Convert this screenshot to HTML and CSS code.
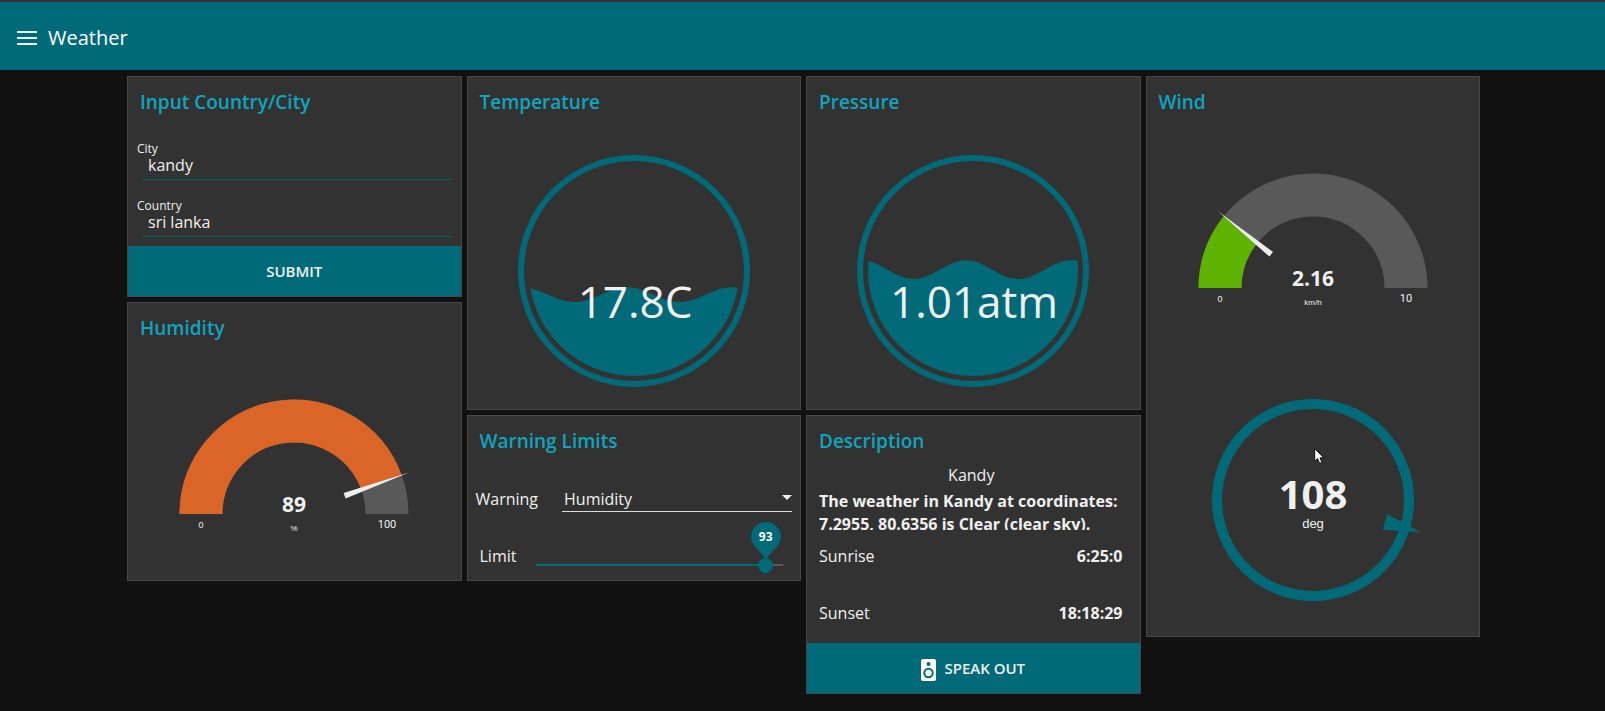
FILE: index.html
```html
<!DOCTYPE html>
<html lang="en">
<head>
<meta charset="utf-8">
<title>Weather</title>
<link rel="stylesheet" href="styles.css">
</head>
<body>
<header class="toolbar">
  <button class="menu" type="button" aria-label="Menu">
    <svg width="20" height="14" viewBox="0 0 20 14"><path d="M0 1h20M0 7h20M0 13h20" stroke="currentColor" stroke-width="2"/></svg>
  </button>
  <h1 class="brand">Weather</h1>
</header>
<main class="board">
  <div class="column">
    <form class="card">
      <h2 class="card-title">Input Country/City</h2>
      <div class="fields">
        <div class="field">
          <label for="city">City</label>
          <input id="city" type="text" value="kandy">
        </div>
        <div class="field">
          <label for="country">Country</label>
          <input id="country" type="text" value="sri lanka">
        </div>
      </div>
      <button class="action" type="button">SUBMIT</button>
    </form>
    <section class="card">
      <h2 class="card-title">Humidity</h2>
      <svg class="gauge" width="250" height="150" viewBox="-125 -125 250 150">
        <path class="rest" d="M-93 0A93 93 0 0 1 93 0"/>
        <path class="hot" d="M-93 0A93 93 0 0 1 87.5 -31.5"/>
        <path class="needle" d="M49.6 -21L51.6 -15.5L115 -41.4Z"/>
        <text class="gauge-value" y="-2">89</text>
        <text class="gauge-unit" y="17">%</text>
        <text class="gauge-min" x="-93" y="14">0</text>
        <text class="gauge-max" x="93" y="14">100</text>
      </svg>
    </section>
  </div>
  <div class="column">
    <section class="card">
      <h2 class="card-title">Temperature</h2>
      <svg class="tank" width="234" height="234" viewBox="-117 -117 234 234">
        <clipPath id="bowl"><circle r="105"/></clipPath>
        <circle class="ring" r="113"/>
        <path class="liquid" clip-path="url(#bowl)" d="M-112 16.3C-93 16.3 -79 31 -59.5 31S-26 16.3 -7 16.3S26 31 45.5 31S79 16.3 98 16.3S131 31 150 31V117H-112Z"/>
        <text class="tank-value" x="1" y="47">17.8C</text>
      </svg>
    </section>
    <section class="card">
      <h2 class="card-title">Warning Limits</h2>
      <div class="warning-row">
        <label for="warning">Warning</label>
        <div class="select">
          <select id="warning"><option>Humidity</option></select>
          <svg class="caret" width="10" height="5" viewBox="0 0 10 5"><path d="M0 0H10L5 5Z" fill="currentColor"/></svg>
        </div>
      </div>
      <div class="limit-row">
        <label for="limit">Limit</label>
        <div class="slider">
          <input id="limit" type="range" min="0" max="100" value="93">
          <output class="bubble" for="limit" style="left:93%">
            <svg width="30" height="38" viewBox="0 0 30 38"><path d="M15 38C12 31 0 24 0 15A15 15 0 0 1 30 15C30 24 18 31 15 38Z" fill="currentColor"/></svg>
            <span>93</span>
          </output>
        </div>
      </div>
    </section>
  </div>
  <div class="column">
    <section class="card">
      <h2 class="card-title">Pressure</h2>
      <svg class="tank" width="234" height="234" viewBox="-117 -117 234 234">
        <circle class="ring" r="113"/>
        <path class="liquid" clip-path="url(#bowl)" d="M-112 -10.7C-93 -10.7 -79 8 -59.5 8S-26 -10.7 -7 -10.7S26 8 45.5 8S79 -10.7 98 -10.7S131 8 150 8V117H-112Z"/>
        <text class="tank-value" x="1" y="47">1.01atm</text>
      </svg>
    </section>
    <section class="card">
      <h2 class="card-title compact">Description</h2>
      <p class="place">Kandy</p>
      <p class="summary">The weather in Kandy at coordinates: 7.2955, 80.6356 is Clear (clear sky).</p>
      <dl class="times">
        <div><dt>Sunrise</dt><dd>6:25:0</dd></div>
        <div><dt>Sunset</dt><dd>18:18:29</dd></div>
      </dl>
      <button class="action" type="button">
        <svg class="speaker" width="15" height="22" viewBox="0 0 15 22"><rect width="15" height="22" rx="2" fill="#fff"/><circle class="hole" cx="7.5" cy="5" r="2"/><circle class="hole" cx="7.5" cy="14" r="5.2"/><circle cx="7.5" cy="14" r="3.2" fill="#fff"/></svg>
        SPEAK OUT
      </button>
    </section>
  </div>
  <div class="column">
    <section class="card">
      <h2 class="card-title">Wind</h2>
      <svg class="gauge" width="250" height="150" viewBox="-125 -125 250 150">
        <path class="rest" d="M-93 0A93 93 0 0 1 93 0"/>
        <path class="calm" d="M-93 0A93 93 0 0 1 -72.4 -58.4"/>
        <path class="needle" d="M-43.6 -31.4L-40 -35.9L-95 -76.7Z"/>
        <text class="gauge-value" y="-2">2.16</text>
        <text class="gauge-unit" y="17">km/h</text>
        <text class="gauge-min" x="-93" y="14">0</text>
        <text class="gauge-max" x="93" y="14">10</text>
      </svg>
      <div class="compass">
        <svg class="dial" width="230" height="230" viewBox="-115 -115 230 230">
          <circle class="track" r="96"/>
          <path class="arrow" d="M74.3 14L69.7 29.7L107.7 32.3Z"/>
          <text class="dial-value" y="9">108</text>
          <text class="dial-unit" y="28">deg</text>
        </svg>
        <svg class="pointer" width="11" height="17" viewBox="0 0 11 17"><path d="M.7 .8V13.2L3.6 10.6L5.6 15.4L7.9 14.4L6 9.8H9.9Z" fill="#fff" stroke="#111"/></svg>
      </div>
    </section>
  </div>
</main>
</body>
</html>
```
FILE: styles.css
```css
:root {
  --teal: #006a78;
  --card: #333232;
  --text: #f0f0f0;
}

* { box-sizing: border-box; }

body {
  margin: 0;
  min-height: 100vh;
  background: #111;
  color: var(--text);
  font: 16px/26px "Open Sans", "Noto Sans", sans-serif;
}

h1, h2, p, dl, dd { margin: 0; }
button, input, select { font: inherit; color: inherit; }
svg { display: block; }

.toolbar {
  display: flex;
  align-items: center;
  gap: 11px;
  height: 70px;
  padding: 4px 17px 0;
  border-top: 2px solid #3a2f36;
  background: var(--teal);
}

.menu {
  padding: 0;
  border: 0;
  background: none;
}

.brand {
  font-size: 20px;
  font-weight: 400;
  color: #fff;
}

.board {
  display: grid;
  grid-template-columns: repeat(4, 1fr);
  align-items: start;
  gap: 5px;
  max-width: 1355px;
  margin: 0 auto;
  padding: 6px 0 16px 2px;
}

.column { display: grid; gap: 5px; }

.card {
  display: flow-root;
  border: 1px solid #474747;
  background: var(--card);
}

.card-title {
  padding: 11px 12px 12px;
  font-size: 19px;
  line-height: 28px;
  font-weight: 600;
  color: #0ea5bf;
}

.card-title.compact { padding-bottom: 8px; }

.fields {
  display: grid;
  gap: 18px;
  padding: 13px 9px 9px;
}

.field label {
  display: block;
  font-size: 12px;
  line-height: 16px;
}

.field input {
  display: block;
  width: calc(100% - 5px);
  height: 23px;
  margin-left: 5px;
  padding: 0 6px 7px;
  border: 0;
  border-bottom: 1px solid #155c5c;
  background: none;
  outline: 0;
}

.action {
  display: flex;
  align-items: center;
  justify-content: center;
  gap: 8px;
  width: 100%;
  height: 50px;
  padding: 0;
  border: 0;
  background: var(--teal);
  font-size: 15px;
  font-weight: 600;
}

.speaker { margin-top: 4px; }
.hole { fill: var(--teal); }

.gauge { margin: 35px auto 41px; }
.gauge path { fill: none; stroke-width: 43; }
.gauge .rest { stroke: #595959; }
.gauge .hot { stroke: #da6527; }
.gauge .calm { stroke: #5eb300; }
.gauge .needle { fill: #eee; }

.gauge text, .tank text, .dial text { fill: var(--text); text-anchor: middle; }
.gauge-value { font-size: 21px; font-weight: 700; }
.gauge-unit { font: 8px "Liberation Sans", sans-serif; }
.gauge-min { font: 9px "Liberation Sans", sans-serif; }
.gauge-max { font: 11px Roboto, sans-serif; }

.tank { margin: 26px auto 21px; }
.ring { fill: none; stroke: var(--teal); stroke-width: 6; }
.liquid { fill: var(--teal); }
.tank-value { font-size: 44px; }

.compass {
  position: relative;
  width: 230px;
  margin: 72px auto 21px;
}

.gauge:has(+ .compass) { margin-bottom: 0; }
.track { fill: none; stroke: var(--teal); stroke-width: 10; }
.arrow { fill: var(--teal); }
.dial-value { font-size: 40px; font-weight: 700; }
.dial-unit { font: 13px "Liberation Sans", sans-serif; }
.pointer { position: absolute; left: 116px; top: 63px; }

.warning-row {
  display: flex;
  gap: 24px;
  padding: 19px 8px 0;
}

.select {
  position: relative;
  flex: 1;
}

.select select {
  display: block;
  width: 100%;
  height: 26px;
  padding: 0 2px;
  appearance: none;
  border: 0;
  border-bottom: 1px solid #ddd;
  border-radius: 0;
  background: none;
}

.caret { position: absolute; right: 0; top: 9px; }

.limit-row {
  display: flex;
  gap: 20px;
  padding: 31px 17px 7px 12px;
}

.slider {
  position: relative;
  flex: 1;
  margin-top: 14px;
}

.slider input {
  display: block;
  width: calc(100% + 14px);
  height: 16px;
  margin: 0 -7px;
  appearance: none;
  background: linear-gradient(90deg, var(--teal) 93%, #595959 93%) center / calc(100% - 14px) 2px no-repeat;
}

.slider input::-webkit-slider-thumb {
  width: 15px;
  height: 15px;
  appearance: none;
  border-radius: 50%;
  background: var(--teal);
}

.bubble {
  position: absolute;
  bottom: 13px;
  display: grid;
  width: 30px;
  margin-left: -15px;
  color: var(--teal);
}

.bubble > * { grid-area: 1 / 1; }

.bubble span {
  color: #fff;
  font-size: 12px;
  line-height: 30px;
  font-weight: 700;
  text-align: center;
}

.place {
  padding-right: 4px;
  line-height: 24px;
  text-align: center;
}

.summary {
  height: 40px;
  margin: 3px 12px 0;
  overflow: hidden;
  line-height: 23px;
  font-weight: 700;
}

.times {
  display: grid;
  gap: 31px;
  padding: 13px 17px 17px 12px;
}

.times div { display: flex; justify-content: space-between; }
.times dd { font-weight: 700; }
```
